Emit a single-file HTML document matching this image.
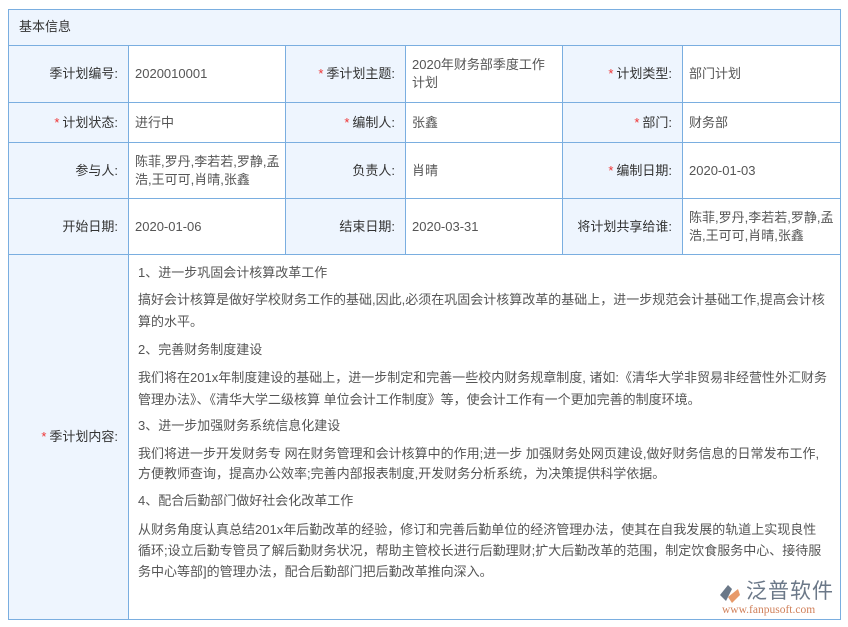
<!DOCTYPE html><html><head><meta charset="utf-8"><style>
body{margin:0;background:#fff;font-family:"Liberation Sans","Noto Sans CJK SC",sans-serif;font-size:13px;color:#555;}
.b{position:absolute;border:1px solid #7aaee0;box-sizing:border-box}
.lab{background:#eef5fe;color:#333;text-align:right;}
.c{position:absolute;box-sizing:border-box;border-right:1px solid #7aaee0;border-bottom:1px solid #7aaee0;display:flex;align-items:center;padding:0 2px 0 6px;line-height:18px;word-break:break-all}
.lab.c{justify-content:flex-end;padding-right:10px}
.s{color:#e33;margin-right:3px}
.l{position:absolute;left:138px;white-space:nowrap;line-height:18px}
</style></head><body>
<div class="b" style="left:8px;top:9px;width:833px;height:611px;"></div>
<div style="position:absolute;left:9px;top:10px;width:831px;height:36px;background:#eef5fe;border-bottom:1px solid #7aaee0;box-sizing:border-box;color:#333;line-height:34px;padding-left:10px">基本信息</div>
<div class="c lab" style="left:9px;top:46px;width:120px;height:57px">季计划编号:</div>
<div class="c" style="left:129px;top:46px;width:157px;height:57px">2020010001</div>
<div class="c lab" style="left:286px;top:46px;width:120px;height:57px"><span class="s">*</span>季计划主题:</div>
<div class="c" style="left:406px;top:46px;width:157px;height:57px"><span>2020年财务部季度工作<br>计划</span></div>
<div class="c lab" style="left:563px;top:46px;width:120px;height:57px"><span class="s">*</span>计划类型:</div>
<div class="c" style="left:683px;top:46px;width:157px;height:57px;border-right:none">部门计划</div>

<div class="c lab" style="left:9px;top:103px;width:120px;height:40px"><span class="s">*</span>计划状态:</div>
<div class="c" style="left:129px;top:103px;width:157px;height:40px">进行中</div>
<div class="c lab" style="left:286px;top:103px;width:120px;height:40px"><span class="s">*</span>编制人:</div>
<div class="c" style="left:406px;top:103px;width:157px;height:40px">张鑫</div>
<div class="c lab" style="left:563px;top:103px;width:120px;height:40px"><span class="s">*</span>部门:</div>
<div class="c" style="left:683px;top:103px;width:157px;height:40px;border-right:none">财务部</div>

<div class="c lab" style="left:9px;top:143px;width:120px;height:56px">参与人:</div>
<div class="c" style="left:129px;top:143px;width:157px;height:56px">陈菲,罗丹,李若若,罗静,孟浩,王可可,肖晴,张鑫</div>
<div class="c lab" style="left:286px;top:143px;width:120px;height:56px">负责人:</div>
<div class="c" style="left:406px;top:143px;width:157px;height:56px">肖晴</div>
<div class="c lab" style="left:563px;top:143px;width:120px;height:56px"><span class="s">*</span>编制日期:</div>
<div class="c" style="left:683px;top:143px;width:157px;height:56px;border-right:none">2020-01-03</div>

<div class="c lab" style="left:9px;top:199px;width:120px;height:56px">开始日期:</div>
<div class="c" style="left:129px;top:199px;width:157px;height:56px">2020-01-06</div>
<div class="c lab" style="left:286px;top:199px;width:120px;height:56px">结束日期:</div>
<div class="c" style="left:406px;top:199px;width:157px;height:56px">2020-03-31</div>
<div class="c lab" style="left:563px;top:199px;width:120px;height:56px">将计划共享给谁:</div>
<div class="c" style="left:683px;top:199px;width:157px;height:56px;border-right:none">陈菲,罗丹,李若若,罗静,孟浩,王可可,肖晴,张鑫</div>

<div class="c lab" style="left:9px;top:255px;width:120px;height:364px;border-bottom:none"><span class="s">*</span>季计划内容:</div>

<div class="l" style="top:264px">1、进一步巩固会计核算改革工作</div>
<div class="l" style="top:291px">搞好会计核算是做好学校财务工作的基础,因此,必须在巩固会计核算改革的基础上，进一步规范会计基础工作,提高会计核</div>
<div class="l" style="top:313px">算的水平。</div>
<div class="l" style="top:341px">2、完善财务制度建设</div>
<div class="l" style="top:369px">我们将在201x年制度建设的基础上，进一步制定和完善一些校内财务规章制度, 诸如:《清华大学非贸易非经营性外汇财务</div>
<div class="l" style="top:391px">管理办法》、《清华大学二级核算 单位会计工作制度》等，使会计工作有一个更加完善的制度环境。</div>
<div class="l" style="top:417px">3、进一步加强财务系统信息化建设</div>
<div class="l" style="top:445px">我们将进一步开发财务专 网在财务管理和会计核算中的作用;进一步 加强财务处网页建设,做好财务信息的日常发布工作,</div>
<div class="l" style="top:465px">方便教师查询，提高办公效率;完善内部报表制度,开发财务分析系统，为决策提供科学依据。</div>
<div class="l" style="top:492px">4、配合后勤部门做好社会化改革工作</div>
<div class="l" style="top:521px">从财务角度认真总结201x年后勤改革的经验，修订和完善后勤单位的经济管理办法，使其在自我发展的轨道上实现良性</div>
<div class="l" style="top:542px">循环;设立后勤专管员了解后勤财务状况，帮助主管校长进行后勤理财;扩大后勤改革的范围，制定饮食服务中心、接待服</div>
<div class="l" style="top:563px">务中心等部]的管理办法，配合后勤部门把后勤改革推向深入。</div>

<svg style="position:absolute;left:718px;top:583px" width="26" height="22" viewBox="0 0 26 22"><path d="M2 12 L10 2 L14 6 L8 18 Z" fill="#6b7888"/><path d="M10 14 L20 6 L22 12 L14 20 Z" fill="#e89a6a"/></svg>
<div style="position:absolute;left:746px;top:580px;font-size:21px;color:#6b7888;letter-spacing:1px;line-height:24px">泛普软件</div>
<div style="position:absolute;left:722px;top:604px;font-family:'Liberation Serif',serif;font-size:11.5px;color:#d0805a;line-height:12px">www.fanpusoft.com</div>
</body></html>
